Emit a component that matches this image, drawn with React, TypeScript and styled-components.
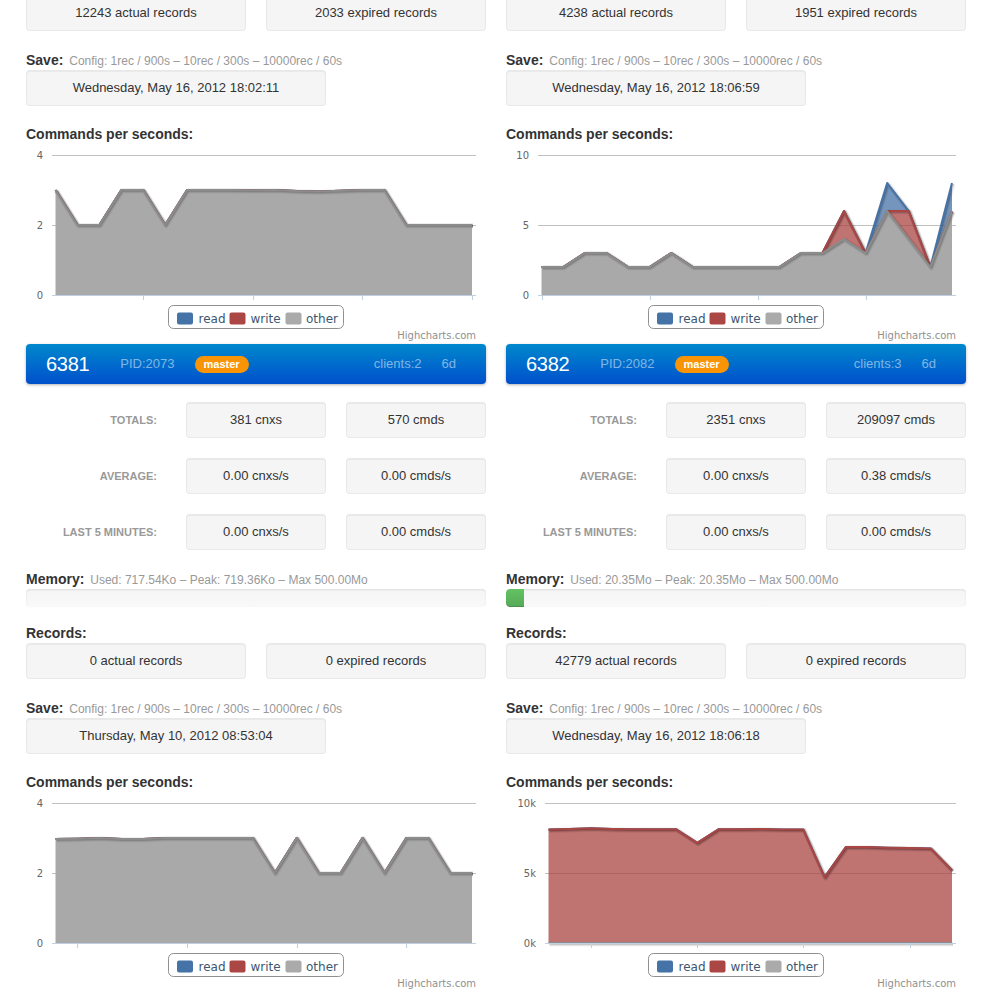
import React, {FC} from 'react';
import styled, {createGlobalStyle} from 'styled-components';

const GlobalStyle = createGlobalStyle`
  html, body {
    margin: 0;
    padding: 0;
    overflow: hidden;
    background: #fff;
  }
  body {
    font-family: "Liberation Sans", Arial, Helvetica, sans-serif;
    font-size: 13px;
    line-height: 18px;
    color: #333;
  }
`;

const Page = styled.div`
  width: 940px;
  margin: -5px auto 0;
  display: grid;
  grid-template-columns: 460px 460px;
  column-gap: 20px;
  align-items: start;
`;

const Column = styled.div`
  display: flex;
  flex-direction: column;
`;

const Well = styled.div<{$width?: number; $mb?: number}>`
  box-sizing: border-box;
  width: ${p => (p.$width ? `${p.$width}px` : 'auto')};
  height: 36px;
  margin-bottom: ${p => p.$mb ?? 0}px;
  display: flex;
  align-items: center;
  justify-content: center;
  background: #f5f5f5;
  border: 1px solid rgba(0, 0, 0, 0.05);
  border-radius: 4px;
  box-shadow: inset 0 1px 1px rgba(0, 0, 0, 0.05);
  font-size: 13px;
  color: #333;
`;

const WellRow = styled.div`
  display: grid;
  grid-template-columns: 220px 220px;
  column-gap: 20px;
  margin-bottom: 19px;
`;

const Heading = styled.div`
  height: 20px;
  font-size: 14px;
  font-weight: bold;
  line-height: 20px;
  color: #333;
  white-space: nowrap;
`;

const HeadingNote = styled.span`
  font-size: 12px;
  font-weight: normal;
  line-height: 1;
  color: #999;
  margin-left: 2px;
`;

const InstanceBar = styled.div`
  height: 40px;
  margin-bottom: 18px;
  display: flex;
  align-items: center;
  padding: 0 30px 0 20px;
  background: linear-gradient(to bottom, #0088cc, #0050cc);
  border-radius: 4px;
  box-shadow: 0 1px 3px rgba(0, 0, 0, 0.3);
  color: #fff;
`;

const Port = styled.span`
  font-size: 20px;
  letter-spacing: -0.3px;
  margin-right: 31px;
`;

const Meta = styled.span<{$push?: boolean; $gap?: number}>`
  font-size: 13px;
  color: rgba(255, 255, 255, 0.5);
  margin-left: ${p => (p.$push ? 'auto' : '0')};
  margin-right: ${p => p.$gap ?? 0}px;
`;

const Badge = styled.span`
  padding: 1px 9px 2px;
  font-size: 11px;
  font-weight: bold;
  line-height: 14px;
  color: #fff;
  background: #f89406;
  border-radius: 9px;
`;

const StatsGrid = styled.div`
  display: grid;
  grid-template-columns: 140px 140px 140px;
  column-gap: 20px;
  row-gap: 20px;
  margin-bottom: 19px;
`;

const StatLabel = styled.div`
  display: flex;
  align-items: center;
  justify-content: flex-end;
  padding-right: 9px;
  font-size: 11px;
  font-weight: bold;
  color: #999;
  text-transform: uppercase;
`;

const Progress = styled.div`
  height: 18px;
  margin-bottom: 16px;
  overflow: hidden;
  background: linear-gradient(to bottom, #f5f5f5, #f9f9f9);
  border-radius: 4px;
  box-shadow: inset 0 1px 2px rgba(0, 0, 0, 0.1);
`;

const ProgressBar = styled.div`
  height: 100%;
  background: linear-gradient(to bottom, #62c462, #57a957);
  box-shadow: inset 0 -1px 0 rgba(0, 0, 0, 0.15);
  border-radius: 4px 0 0 4px;
`;

const ChartBox = styled.svg`
  display: block;
  width: 460px;
  height: 200px;
  font-family: "DejaVu Sans", Verdana, sans-serif;
`;

// ---------- chart ----------

interface ChartSpec {
    max: number;
    labels: string[];
    plotLeft: number;
    ticks: number[];
    read: number[];
    write: number[];
    other: number[];
}

const PLOT_TOP = 11;
const PLOT_BOTTOM = 151;
const PLOT_RIGHT = 450;
const LAST_X = 446;

const zeros = (n: number) => Array.from({length: n}, () => 0);

const SERIES = [
    {name: 'read', line: '#4572A7', fill: '#4572A7', opacity: 0.75, swatch: '#4572A7', sx: 151, tx: 172.5},
    {name: 'write', line: '#AA4643', fill: '#AA4643', opacity: 0.75, swatch: '#AA4643', sx: 203.5, tx: 224.5},
    {name: 'other', line: '#8c8c8c', fill: '#a9a9a9', opacity: 1, swatch: '#AAAAAA', sx: 259.5, tx: 280},
];

const Chart: FC<{spec: ChartSpec}> = ({spec}) => {
    const n = spec.other.length;
    const x0 = spec.plotLeft + 3.5;
    const x = (i: number) => x0 + (i * (LAST_X - x0)) / (n - 1);
    const y = (v: number) => PLOT_BOTTOM - (v / spec.max) * (PLOT_BOTTOM - PLOT_TOP);

    const otherTop = spec.other;
    const writeTop = spec.other.map((v, i) => v + spec.write[i]);
    const readTop = writeTop.map((v, i) => v + spec.read[i]);
    const base = zeros(n);

    const pts = (vals: number[]) => vals.map((v, i) => `${x(i).toFixed(1)},${y(v).toFixed(1)}`);
    const area = (top: number[], bottom: number[]) =>
        'M' + pts(top).join(' L') + ' L' + pts(bottom).reverse().join(' L') + ' Z';
    const line = (top: number[]) => 'M' + pts(top).join(' L');

    const layers = [
        {top: readTop, bottom: writeTop, s: SERIES[0]},
        {top: writeTop, bottom: otherTop, s: SERIES[1]},
        {top: otherTop, bottom: base, s: SERIES[2]},
    ];

    const steps = spec.labels.length - 1;

    return (
        <ChartBox viewBox="0 0 460 200">
            {spec.labels.map((label, k) => {
                const gy = Math.round(y((spec.max * k) / steps)) + 0.5;
                return (
                    <g key={label}>
                        <line x1={spec.plotLeft} x2={PLOT_RIGHT} y1={gy} y2={gy} stroke="#C0C0C0" strokeWidth={1}/>
                        <text x={spec.plotLeft - 9} y={gy + 3.5} fontSize={10} fill="#666" textAnchor="end">{label}</text>
                    </g>
                );
            })}
            {layers.map((l, k) => (
                <g key={k}>
                    <path d={area(l.top, l.bottom)} fill={l.s.fill} fillOpacity={l.s.opacity}/>
                    {[1, 2, 3].map(s => (
                        <path key={s} d={line(l.top)} fill="none" stroke="#000" strokeOpacity={0.05 * s}
                              strokeWidth={7 - 2 * s} transform="translate(1,1)" strokeLinejoin="round"/>
                    ))}
                    <path d={line(l.top)} fill="none" stroke={l.s.line} strokeWidth={2} strokeLinejoin="round"/>
                </g>
            ))}
            <line x1={spec.plotLeft} x2={PLOT_RIGHT} y1={PLOT_BOTTOM + 0.5} y2={PLOT_BOTTOM + 0.5} stroke="#C0D0E0"/>
            {spec.ticks.map(t => {
                const tx = Math.round(x(t)) + 0.5;
                return <line key={t} x1={tx} x2={tx} y1={PLOT_BOTTOM} y2={PLOT_BOTTOM + 5} stroke="#C0D0E0"/>;
            })}
            <rect x={142.5} y={161.5} width={175} height={23} rx={5} fill="#fff" stroke="#909090"/>
            {SERIES.map(s => (
                <g key={s.name}>
                    <rect x={s.sx} y={168.5} width={16} height={12} rx={2} fill={s.swatch}/>
                    <text x={s.tx} y={178.5} fontSize={12} fill="#3E576F">{s.name}</text>
                </g>
            ))}
            <text x={PLOT_RIGHT} y={194.5} fontSize={10} fill="#909090" textAnchor="end">Highcharts.com</text>
        </ChartBox>
    );
};

// ---------- data ----------

const CONFIG = 'Config: 1rec / 900s – 10rec / 300s – 10000rec / 60s';

interface Instance {
    port?: string;
    pid?: string;
    clients?: string;
    uptime?: string;
    totals?: [string, string];
    average?: [string, string];
    last5?: [string, string];
    memory?: {note: string; used: number; max: number};
    actual: string;
    expired: string;
    saved: string;
    chart: ChartSpec;
}

const chartTopLeft: ChartSpec = {
    max: 4,
    labels: ['0', '2', '4'],
    plotLeft: 26,
    ticks: [4, 9, 14, 19],
    read: zeros(20),
    write: zeros(20),
    other: [3, 2, 2, 3, 3, 2, 3, 3, 3, 2.99, 3, 2.97, 2.96, 2.98, 3, 3, 2, 2, 2, 2],
};

const chartTopRight: ChartSpec = {
    max: 10,
    labels: ['0', '5', '10'],
    plotLeft: 32,
    ticks: [0, 5, 10, 15],
    read: [0, 0, 0, 0, 0, 0, 0, 0, 0, 0, 0, 0, 0, 0, 0, 0, 2, 0, 0, 2],
    write: [0, 0, 0, 0, 0, 0, 0, 0, 0, 0, 0, 0, 0, 0, 2, 0, 0, 2, 0, 0],
    other: [2, 2, 3, 3, 2, 2, 3, 2, 2, 2, 2, 2, 3, 3, 4, 3, 6, 4, 2, 6],
};

const chartBottomLeft: ChartSpec = {
    max: 4,
    labels: ['0', '2', '4'],
    plotLeft: 26,
    ticks: [1, 6, 11, 16],
    read: zeros(20),
    write: zeros(20),
    other: [2.97, 2.98, 3, 2.97, 2.97, 3, 3, 3, 3, 3, 2, 3, 2, 2, 3, 2, 3, 3, 2, 2],
};

const chartBottomRight: ChartSpec = {
    max: 10000,
    labels: ['0k', '5k', '10k'],
    plotLeft: 39,
    ticks: [2, 7, 12, 17],
    read: zeros(20),
    write: [8100, 8150, 8200, 8150, 8130, 8120, 8130, 7150, 8120, 8120, 8150, 8110, 8110, 4700, 6850, 6850, 6800, 6780, 6760, 5200],
    other: zeros(20),
};

const columns: Instance[][] = [
    [
        {
            actual: '12243 actual records',
            expired: '2033 expired records',
            saved: 'Wednesday, May 16, 2012 18:02:11',
            chart: chartTopLeft,
        },
        {
            port: '6381', pid: 'PID:2073', clients: 'clients:2', uptime: '6d',
            totals: ['381 cnxs', '570 cmds'],
            average: ['0.00 cnxs/s', '0.00 cmds/s'],
            last5: ['0.00 cnxs/s', '0.00 cmds/s'],
            memory: {note: 'Used: 717.54Ko – Peak: 719.36Ko – Max 500.00Mo', used: 0.70072, max: 500},
            actual: '0 actual records',
            expired: '0 expired records',
            saved: 'Thursday, May 10, 2012 08:53:04',
            chart: chartBottomLeft,
        },
    ],
    [
        {
            actual: '4238 actual records',
            expired: '1951 expired records',
            saved: 'Wednesday, May 16, 2012 18:06:59',
            chart: chartTopRight,
        },
        {
            port: '6382', pid: 'PID:2082', clients: 'clients:3', uptime: '6d',
            totals: ['2351 cnxs', '209097 cmds'],
            average: ['0.00 cnxs/s', '0.38 cmds/s'],
            last5: ['0.00 cnxs/s', '0.00 cmds/s'],
            memory: {note: 'Used: 20.35Mo – Peak: 20.35Mo – Max 500.00Mo', used: 20.35, max: 500},
            actual: '42779 actual records',
            expired: '0 expired records',
            saved: 'Wednesday, May 16, 2012 18:06:18',
            chart: chartBottomRight,
        },
    ],
];

// ---------- blocks ----------

const InstanceBlock: FC<{item: Instance}> = ({item}) => {
    const full = !!item.port;
    const pct = item.memory ? Math.round((item.memory.used / item.memory.max) * 100) : 0;
    return (
        <>
            {full && (
                <>
                    <InstanceBar>
                        <Port>{item.port}</Port>
                        <Meta $gap={20}>{item.pid}</Meta>
                        <Badge>master</Badge>
                        <Meta $push $gap={20}>{item.clients}</Meta>
                        <Meta>{item.uptime}</Meta>
                    </InstanceBar>
                    <StatsGrid>
                        <StatLabel>Totals:</StatLabel>
                        <Well>{item.totals![0]}</Well>
                        <Well>{item.totals![1]}</Well>
                        <StatLabel>Average:</StatLabel>
                        <Well>{item.average![0]}</Well>
                        <Well>{item.average![1]}</Well>
                        <StatLabel>Last 5 minutes:</StatLabel>
                        <Well>{item.last5![0]}</Well>
                        <Well>{item.last5![1]}</Well>
                    </StatsGrid>
                    <Heading>Memory: <HeadingNote>{item.memory!.note}</HeadingNote></Heading>
                    <Progress>
                        {pct > 0 && <ProgressBar style={{width: `${pct}%`}}/>}
                    </Progress>
                    <Heading>Records:</Heading>
                </>
            )}
            <WellRow>
                <Well>{item.actual}</Well>
                <Well>{item.expired}</Well>
            </WellRow>
            <Heading>Save: <HeadingNote>{CONFIG}</HeadingNote></Heading>
            <Well $width={300} $mb={18}>{item.saved}</Well>
            <Heading>Commands per seconds:</Heading>
            <Chart spec={item.chart}/>
        </>
    );
};

const App: FC = () => {
    return (
        <>
            <GlobalStyle/>
            <Page>
                {columns.map((col, c) => (
                    <Column key={c}>
                        {col.map((item, k) => (
                            <InstanceBlock key={k} item={item}/>
                        ))}
                    </Column>
                ))}
            </Page>
        </>
    );
};

export default App;
